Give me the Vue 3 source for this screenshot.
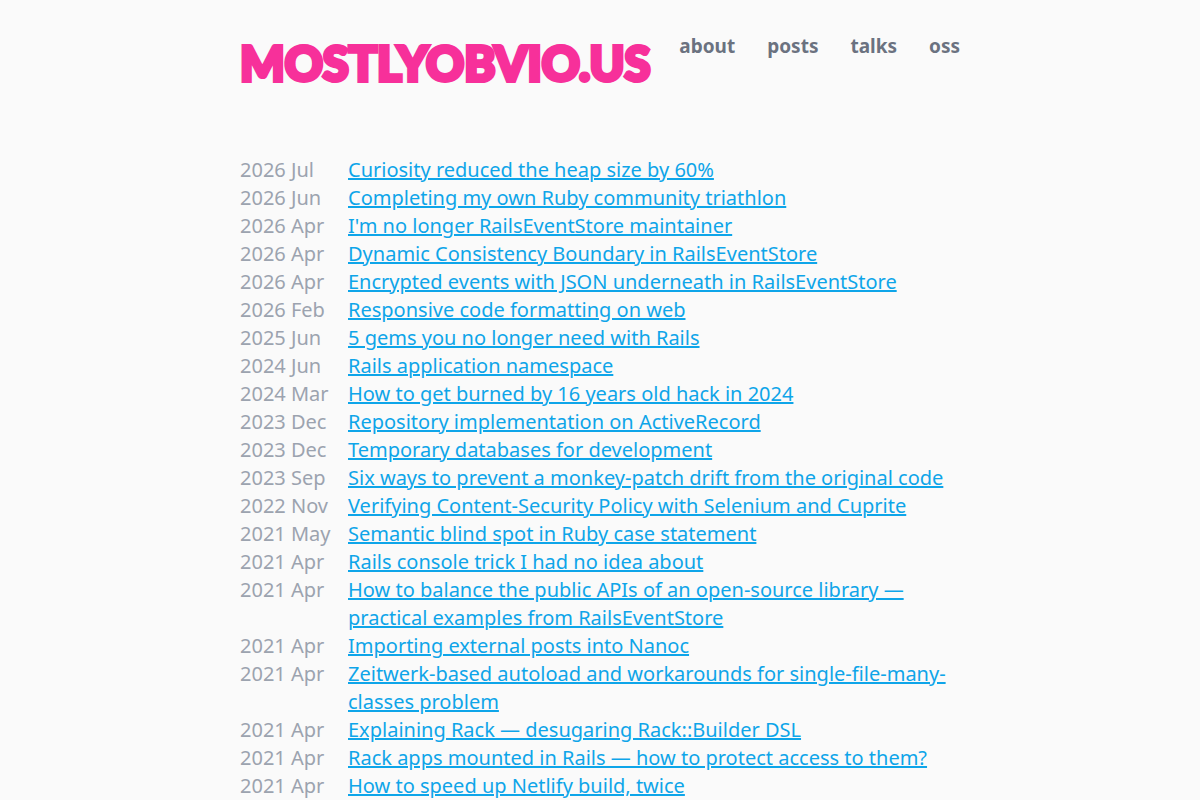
<script setup>
const links = ['about', 'posts', 'talks', 'oss']

const posts = [
  ['2026 Jul', 'Curiosity reduced the heap size by 60%'],
  ['2026 Jun', 'Completing my own Ruby community triathlon'],
  ['2026 Apr', "I'm no longer RailsEventStore maintainer"],
  ['2026 Apr', 'Dynamic Consistency Boundary in RailsEventStore'],
  ['2026 Apr', 'Encrypted events with JSON underneath in RailsEventStore'],
  ['2026 Feb', 'Responsive code formatting on web'],
  ['2025 Jun', '5 gems you no longer need with Rails'],
  ['2024 Jun', 'Rails application namespace'],
  ['2024 Mar', 'How to get burned by 16 years old hack in 2024'],
  ['2023 Dec', 'Repository implementation on ActiveRecord'],
  ['2023 Dec', 'Temporary databases for development'],
  ['2023 Sep', 'Six ways to prevent a monkey-patch drift from the original code'],
  ['2022 Nov', 'Verifying Content-Security Policy with Selenium and Cuprite'],
  ['2021 May', 'Semantic blind spot in Ruby case statement'],
  ['2021 Apr', 'Rails console trick I had no idea about'],
  ['2021 Apr', 'How to balance the public APIs of an open-source library — practical examples from RailsEventStore'],
  ['2021 Apr', 'Importing external posts into Nanoc'],
  ['2021 Apr', 'Zeitwerk-based autoload and workarounds for single-file-many-classes problem'],
  ['2021 Apr', 'Explaining Rack — desugaring Rack::Builder DSL'],
  ['2021 Apr', 'Rack apps mounted in Rails — how to protect access to them?'],
  ['2021 Apr', 'How to speed up Netlify build, twice'],
]
</script>

<template>
  <div class="page">
    <header class="header">
      <a class="logo" href="#">MOSTLYOBVIO.US</a>
      <nav class="nav">
        <a v-for="link in links" :key="link" :href="'#' + link">{{ link }}</a>
      </nav>
    </header>
    <main>
      <ul class="posts">
        <li v-for="([date, title], i) in posts" :key="i" class="post">
          <time class="date">{{ date }}</time>
          <a class="title" href="#posts">{{ title }}</a>
        </li>
      </ul>
    </main>
  </div>
</template>

<style>
body {
  margin: 0;
  background: #fafafa;
}
</style>

<style scoped>
.page {
  max-width: 720px;
  margin: 0 auto;
  padding-top: 32px;
  font-family: "Noto Sans", sans-serif;
  font-size: 20px;
  line-height: 28px;
}

.header {
  display: flex;
  justify-content: space-between;
  align-items: flex-start;
  margin-bottom: 62px;
}

.logo {
  color: #f7309a;
  font-family: Lato, sans-serif;
  font-size: 47px;
  font-weight: 900;
  line-height: 62px;
  text-decoration: none;
  -webkit-text-stroke: 4px #f7309a;
}

.nav {
  display: flex;
  gap: 32px;
}

.nav a {
  color: #6b7280;
  font-size: 19px;
  font-weight: 700;
  text-decoration: none;
}

.posts {
  margin: 0;
  padding: 0;
  list-style: none;
}

.post {
  display: flex;
}

.date {
  flex: 0 0 108px;
  color: #9ca3af;
}

.title {
  color: #0ea5e9;
  text-decoration: underline;
}
</style>
